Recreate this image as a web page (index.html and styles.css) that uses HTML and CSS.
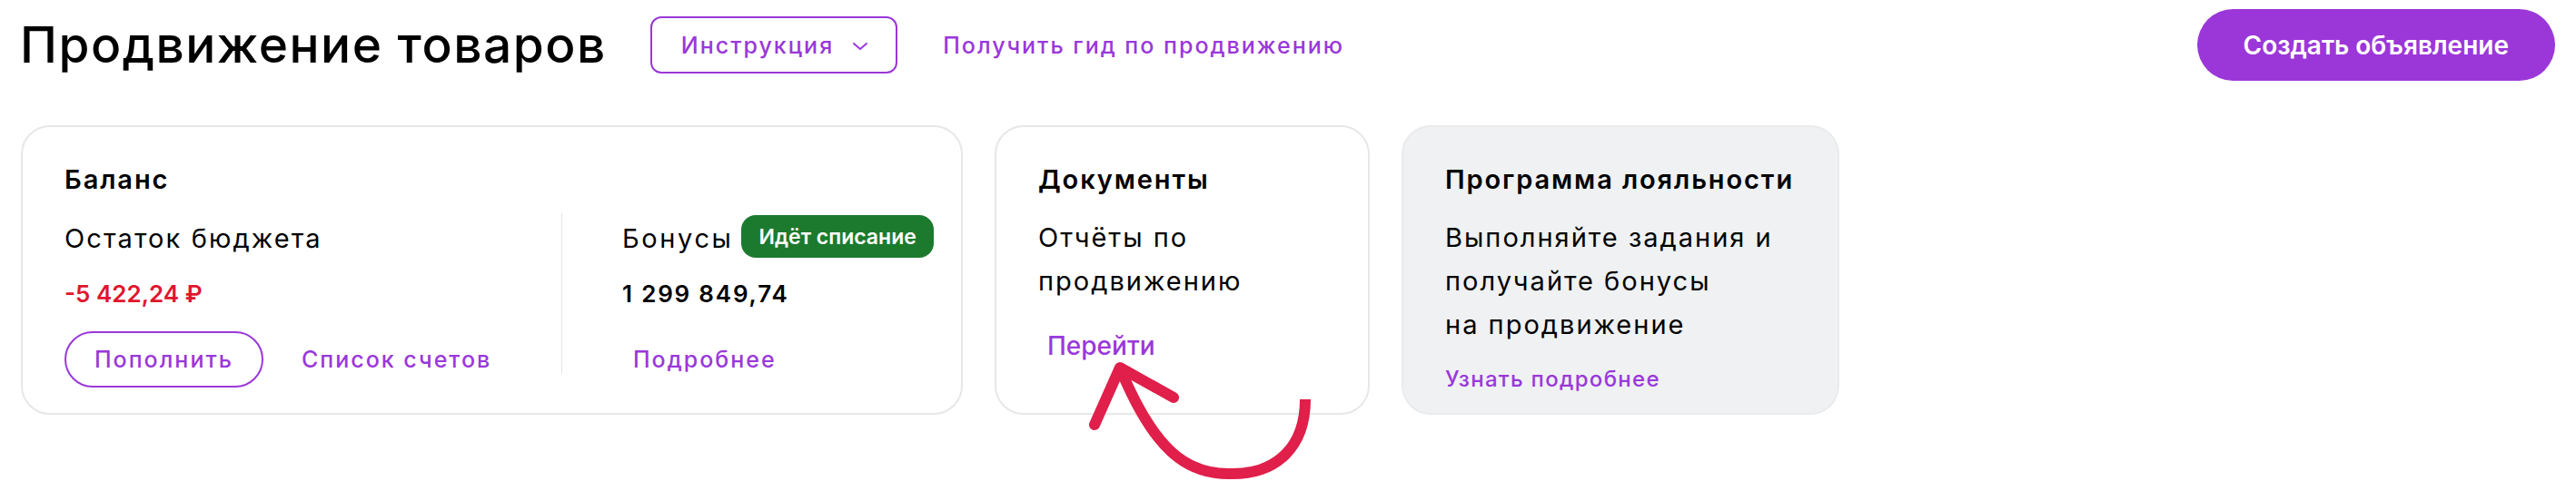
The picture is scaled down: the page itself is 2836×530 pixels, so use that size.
FILE: index.html
```html
<!DOCTYPE html>
<html lang="ru">
<head>
    <meta charset="UTF-8">
    <meta name="viewport" content="width=device-width, initial-scale=1.0">
    <title>Продвижение товаров</title>
    <link rel="stylesheet" href="styles.css">
</head>
<body>
    <header class="top-bar">
        <h1 class="page-title">Продвижение товаров</h1>
        <button class="btn-outline btn-dropdown">
            Инструкция
            <svg class="chevron" width="18" height="10" viewBox="0 0 18 10">
                <path d="M2 2 L9 8 L16 2" fill="none" stroke="currentColor" stroke-width="2" stroke-linecap="round" stroke-linejoin="round"/>
            </svg>
        </button>
        <a class="link-guide" href="#">Получить гид по продвижению</a>
        <button class="btn-primary">Создать объявление</button>
    </header>

    <section class="cards">
        <div class="card card-balance">
            <h2 class="card-title">Баланс</h2>
            <div class="balance-grid">
                <div class="balance-col">
                    <div class="balance-row">Остаток бюджета</div>
                    <div class="balance-amount negative">-5 422,24 ₽</div>
                    <div class="balance-actions">
                        <button class="btn-outline btn-pill">Пополнить</button>
                        <a class="link-btn" href="#">Список счетов</a>
                    </div>
                </div>
                <div class="divider"></div>
                <div class="balance-col bonus-col">
                    <div class="balance-row">
                        <span class="bonus-label">Бонусы</span>
                        <span class="badge">Идёт списание</span>
                    </div>
                    <div class="balance-amount bonus-amount">1 299 849,74</div>
                    <div class="balance-actions">
                        <a class="link-btn" href="#">Подробнее</a>
                    </div>
                </div>
            </div>
        </div>

        <div class="card card-docs">
            <h2 class="card-title">Документы</h2>
            <p class="card-text">Отчёты по продвижению</p>
            <a class="link-go" href="#">Перейти</a>

            <!-- hand-drawn pointer to the link -->
            <svg class="hint-arrow" width="280" height="142" viewBox="0 0 280 142">
                <path d="M252 52 C252 105 220 134 172 134 C120 136 85 105 50 22" fill="none" stroke="#e01f4b" stroke-width="12"/>
                <path d="M20 80 L48 17 L107 50" fill="none" stroke="#e01f4b" stroke-width="12" stroke-linecap="round" stroke-linejoin="round"/>
            </svg>
        </div>

        <div class="card card-loyalty">
            <h2 class="card-title">Программа лояльности</h2>
            <p class="card-text">Выполняйте задания и получайте бонусы на&nbsp;продвижение</p>
            <a class="link-more" href="#">Узнать подробнее</a>
        </div>
    </section>
</body>
</html>
```

FILE: styles.css
```css
* {
    box-sizing: border-box;
}

html, body {
    min-height: 530px;
}

body {
    font-family: Inter, "Noto Sans", Arial, sans-serif;
    margin: 0;
    padding: 10px 23px 0 22px;
    background-color: #fff;
    color: #000;
}

a {
    text-decoration: none;
    color: #9a38da;
}

button {
    font-family: inherit;
    cursor: pointer;
}

.top-bar {
    display: flex;
    align-items: center;
    height: 79px;
}

.page-title {
    margin: 0 48px 0 0;
    font-size: 55px;
    font-weight: 500;
    line-height: 1;
    letter-spacing: 1.5px;
}

.btn-outline {
    border: 2px solid #9a38da;
    background: #fff;
    color: #9a38da;
    font-size: 25px;
    font-weight: 500;
    letter-spacing: 2px;
}

.btn-dropdown {
    display: flex;
    align-items: center;
    gap: 20px;
    height: 63px;
    padding: 0 30px 0 32px;
    border-radius: 12px;
}

.chevron {
    margin-top: 2px;
}

.link-guide {
    margin-left: 50px;
    font-size: 25px;
    font-weight: 500;
    letter-spacing: 2px;
}

.btn-primary {
    margin-left: auto;
    height: 79px;
    padding: 0 51px;
    border: none;
    border-radius: 40px;
    background: #9b37d9;
    color: #fff;
    font-size: 28px;
    font-weight: 600;
}

.cards {
    display: flex;
    gap: 35px;
    margin-top: 49px;
    margin-left: 1px;
}

.card {
    height: 319px;
    border: 2px solid #e7e7e7;
    border-radius: 32px;
    padding: 40px 28px 0 46px;
}

.card-balance {
    width: 1037px;
}

.card-docs {
    width: 413px;
    position: relative;
}

.card-loyalty {
    width: 482px;
    background: #eff1f3;
    border-color: #eaebed;
}

.card-title {
    margin: 0;
    font-size: 29px;
    font-weight: 600;
    line-height: 36px;
    letter-spacing: 1.9px;
    white-space: nowrap;
}

.card-text {
    margin: 22px 0 0;
    font-size: 29px;
    line-height: 48px;
    letter-spacing: 2px;
}

.balance-grid {
    display: grid;
    grid-template-columns: 547px 1px auto;
    margin-top: 22px;
}

.balance-row {
    display: flex;
    align-items: center;
    gap: 8px;
    height: 48px;
    font-size: 29px;
    letter-spacing: 2.1px;
}

.bonus-label {
    letter-spacing: 2.6px;
}

.badge {
    display: inline-flex;
    align-items: center;
    height: 47px;
    padding: 0 19px 0 20px;
    border-radius: 16px;
    background: #1c7a2e;
    color: #fff;
    font-size: 23px;
    font-weight: 600;
    letter-spacing: 0;
    margin-top: -3px;
}

.balance-amount {
    margin-top: 20px;
    font-size: 26px;
    font-weight: 600;
    line-height: 36px;
}

.negative {
    color: #e0162d;
}

.bonus-amount {
    letter-spacing: 1.8px;
}

.balance-actions {
    display: flex;
    align-items: center;
    gap: 30px;
    margin-top: 23px;
    height: 62px;
}

.btn-pill {
    height: 62px;
    padding: 0 31px;
    border-radius: 31px;
}

.link-btn {
    padding: 0 12px;
    font-size: 25px;
    font-weight: 500;
    letter-spacing: 2px;
}

.divider {
    background: #e4e4e4;
    margin-bottom: 15px;
    margin-top: -3px;
}

.bonus-col {
    padding-left: 66px;
}

.link-go {
    display: inline-block;
    margin-top: 29px;
    padding: 0 10px;
    font-size: 28px;
    font-weight: 500;
    line-height: 36px;
}

.link-more {
    display: inline-block;
    margin-top: 20px;
    font-size: 24px;
    font-weight: 500;
    line-height: 32px;
    letter-spacing: 1.3px;
}

.hint-arrow {
    position: absolute;
    left: 88px;
    top: 248px;
}
```
